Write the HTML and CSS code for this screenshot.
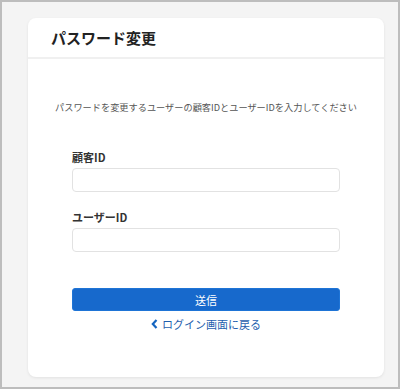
FILE: index.html
```html
<!DOCTYPE html>
<html lang="ja">
<head>
<meta charset="utf-8">
<link rel="stylesheet" href="styles.css">
</head>
<body>
<div class="frame">
  <div class="card">
    <div class="card-header">
      <h1 class="title">パスワード変更</h1>
    </div>
    <div class="card-body">
      <p class="desc">パスワードを変更するユーザーの顧客IDとユーザーIDを入力してください</p>
      <div class="field">
        <label class="label">顧客ID</label>
        <input class="input" type="text">
      </div>
      <div class="field">
        <label class="label">ユーザーID</label>
        <input class="input" type="text">
      </div>
      <button class="btn">送信</button>
      <a class="back" href="#"><svg class="chev" width="7" height="10" viewBox="0 0 7 10"><path d="M5.5 1 L1.8 5 L5.5 9" fill="none" stroke="#1565c0" stroke-width="2.2"/></svg>ログイン画面に戻る</a>
    </div>
  </div>
</div>
</body>
</html>
```
FILE: styles.css
```css
* { box-sizing: border-box; }
html, body { margin: 0; padding: 0; }
body {
  font-family: "Noto Sans CJK JP", "Noto Sans", sans-serif;
  color: #333;
}
.frame {
  width: 400px;
  height: 389px;
  border: 2px solid #bdbdbd;
  background: #f4f4f4;
  padding: 16px 14px 10px 26px;
  display: flex;
}
.card {
  flex: 1;
  background: #fff;
  border-radius: 8px;
  box-shadow: 0 1px 3px rgba(0,0,0,0.08);
  display: flex;
  flex-direction: column;
}
.card-header {
  height: 41px;
  border-bottom: 2px solid #f0f0f0;
  padding-left: 23px;
  display: flex;
  align-items: center;
}
.title {
  margin: 0;
  font-size: 15px;
  font-weight: 700;
  color: #222;
  line-height: 1;
}
.card-body {
  padding: 0 44px;
  display: flex;
  flex-direction: column;
}
.desc {
  margin: 41px -30px 0;
  text-align: center;
  font-size: 9.2px;
  line-height: 14px;
  color: #555;
}
.field {
  display: flex;
  flex-direction: column;
}
.label {
  font-size: 11px;
  font-weight: 700;
  color: #333;
  line-height: 14px;
  margin-top: 36px;
  margin-bottom: 4px;
}
.field + .field .label { margin-top: 18px; }
.input {
  height: 24px;
  border: 1px solid #e2e2e2;
  border-radius: 4px;
  background: #fff;
  outline: none;
}
.btn {
  margin-top: 36px;
  height: 23px;
  border: 1px solid #1e74d6;
  border-radius: 3px;
  background: #1769cc;
  color: #fff;
  font-family: inherit;
  font-size: 11px;
  padding: 0;
}
.back {
  margin-top: 6px;
  align-self: center;
  display: flex;
  align-items: center;
  gap: 4px;
  font-size: 11px;
  line-height: 14px;
  color: #1f5fae;
  text-decoration: none;
}
.chev { display: block; }
```
